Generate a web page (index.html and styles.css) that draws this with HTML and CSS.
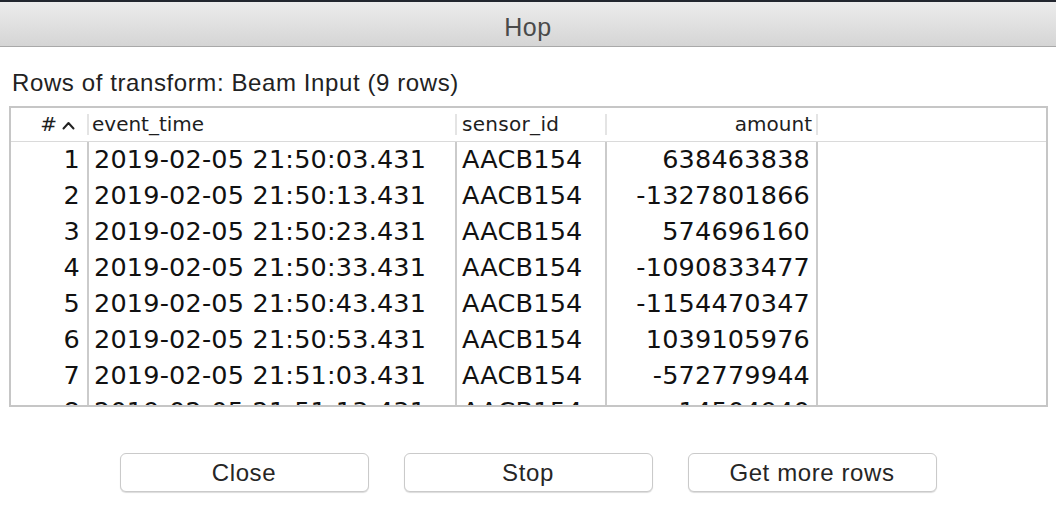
FILE: index.html
```html
<!DOCTYPE html>
<html>
<head>
<meta charset="utf-8">
<link rel="stylesheet" href="styles.css">
</head>
<body>
<div class="window">
  <div class="titlebar"><span class="title">Hop</span></div>
  <div class="content">
    <div class="label">Rows of transform: Beam Input (9 rows)</div>
    <div class="grid">
      <div class="row head">
        <div class="cell c-num"><span class="hash">#</span><svg class="sort" width="13" height="9" viewBox="0 0 13 9"><path d="M1.5 7.5 L6.5 2 L11.5 7.5" fill="none" stroke="#222" stroke-width="2" stroke-linecap="round" stroke-linejoin="round"/></svg></div>
        <div class="cell c-time">event_time</div>
        <div class="cell c-sensor">sensor_id</div>
        <div class="cell c-amount">amount</div>
        <div class="cell c-rest"></div>
      </div>
      <div class="body">
        <div class="row"><div class="cell c-num">1</div><div class="cell c-time">2019-02-05 21:50:03.431</div><div class="cell c-sensor">AACB154</div><div class="cell c-amount">638463838</div><div class="cell c-rest"></div></div>
        <div class="row"><div class="cell c-num">2</div><div class="cell c-time">2019-02-05 21:50:13.431</div><div class="cell c-sensor">AACB154</div><div class="cell c-amount">-1327801866</div><div class="cell c-rest"></div></div>
        <div class="row"><div class="cell c-num">3</div><div class="cell c-time">2019-02-05 21:50:23.431</div><div class="cell c-sensor">AACB154</div><div class="cell c-amount">574696160</div><div class="cell c-rest"></div></div>
        <div class="row"><div class="cell c-num">4</div><div class="cell c-time">2019-02-05 21:50:33.431</div><div class="cell c-sensor">AACB154</div><div class="cell c-amount">-1090833477</div><div class="cell c-rest"></div></div>
        <div class="row"><div class="cell c-num">5</div><div class="cell c-time">2019-02-05 21:50:43.431</div><div class="cell c-sensor">AACB154</div><div class="cell c-amount">-1154470347</div><div class="cell c-rest"></div></div>
        <div class="row"><div class="cell c-num">6</div><div class="cell c-time">2019-02-05 21:50:53.431</div><div class="cell c-sensor">AACB154</div><div class="cell c-amount">1039105976</div><div class="cell c-rest"></div></div>
        <div class="row"><div class="cell c-num">7</div><div class="cell c-time">2019-02-05 21:51:03.431</div><div class="cell c-sensor">AACB154</div><div class="cell c-amount">-572779944</div><div class="cell c-rest"></div></div>
        <div class="row"><div class="cell c-num">8</div><div class="cell c-time">2019-02-05 21:51:13.431</div><div class="cell c-sensor">AACB154</div><div class="cell c-amount">-14504940</div><div class="cell c-rest"></div></div>
      </div>
    </div>
    <div class="buttons">
      <button class="btn">Close</button>
      <button class="btn">Stop</button>
      <button class="btn">Get more rows</button>
    </div>
  </div>
</div>
</body>
</html>
```

FILE: styles.css
```css
html, body {
  margin: 0;
  padding: 0;
  background: #ffffff;
}
body {
  width: 1056px;
  height: 518px;
  overflow: hidden;
  font-family: "Liberation Sans", Arial, sans-serif;
  color: #1e1e1e;
}
.window {
  display: flex;
  flex-direction: column;
  height: 518px;
}
.titlebar {
  box-sizing: border-box;
  height: 47px;
  padding-top: 6px;
  border-top: 2px solid #22262f;
  border-bottom: 1px solid #a9a9a9;
  background: linear-gradient(#ececec, #d5d5d5);
  display: flex;
  align-items: center;
  justify-content: center;
}
.title {
  font-size: 25px;
  line-height: 30px;
  color: #4a4a4a;
  letter-spacing: 0.5px;
}
.content {
  padding: 0 8px 0 9px;
  display: flex;
  flex-direction: column;
}
.label {
  margin-top: 23px;
  height: 26px;
  line-height: 26px;
  padding-left: 3px;
  font-size: 24px;
  letter-spacing: 0.6px;
  color: #222;
}
.grid {
  margin-top: 10px;
  height: 297px;
  border: 2px solid #c6c6c6;
  overflow: hidden;
  font-family: "DejaVu Sans", sans-serif;
}
.row {
  display: flex;
  height: 36px;
}
.cell {
  box-sizing: border-box;
  white-space: nowrap;
}
.head {
  height: 33px;
  border-bottom: 1px solid #dadada;
  font-size: 20px;
  align-items: center;
}
.head .cell {
  height: 21px;
  line-height: 21px;
  border-right: 2px solid #e4e4e4;
}
.head .c-rest { border-right: none; }
.c-num { width: 78px; text-align: right; padding-right: 7px; }
.c-time { width: 368px; padding-left: 5px; }
.c-sensor { width: 150px; padding-left: 5px; }
.c-amount { width: 211px; text-align: right; padding-right: 6px; }
.c-rest { flex: 1; }
.head .c-num {
  display: flex;
  justify-content: flex-end;
  align-items: center;
  gap: 5px;
  padding-right: 12px;
}
.head .c-time { padding-left: 3px; }
.head .c-sensor { padding-left: 5px; letter-spacing: 0.3px; }
.head .c-amount { padding-right: 4px; }
.sort { display: block; margin-top: 1px; }
.body {
  font-size: 25.5px;
  letter-spacing: 0.2px;
  color: #111;
}
.body .cell {
  line-height: 35px;
  border-right: 2px solid #cbcbcb;
}
.body .c-rest { border-right: none; }
.buttons {
  margin-top: 46px;
  display: flex;
  justify-content: center;
  gap: 35px;
  padding-right: 1px;
}
.btn {
  width: 249px;
  height: 39px;
  line-height: 37px;
  border: 1px solid #cacaca;
  border-radius: 6px;
  background: #ffffff;
  box-shadow: 0 1px 1px rgba(0, 0, 0, 0.14);
  font-family: "Liberation Sans", Arial, sans-serif;
  font-size: 24px;
  letter-spacing: 0.6px;
  color: #262626;
  padding: 0;
}
```
